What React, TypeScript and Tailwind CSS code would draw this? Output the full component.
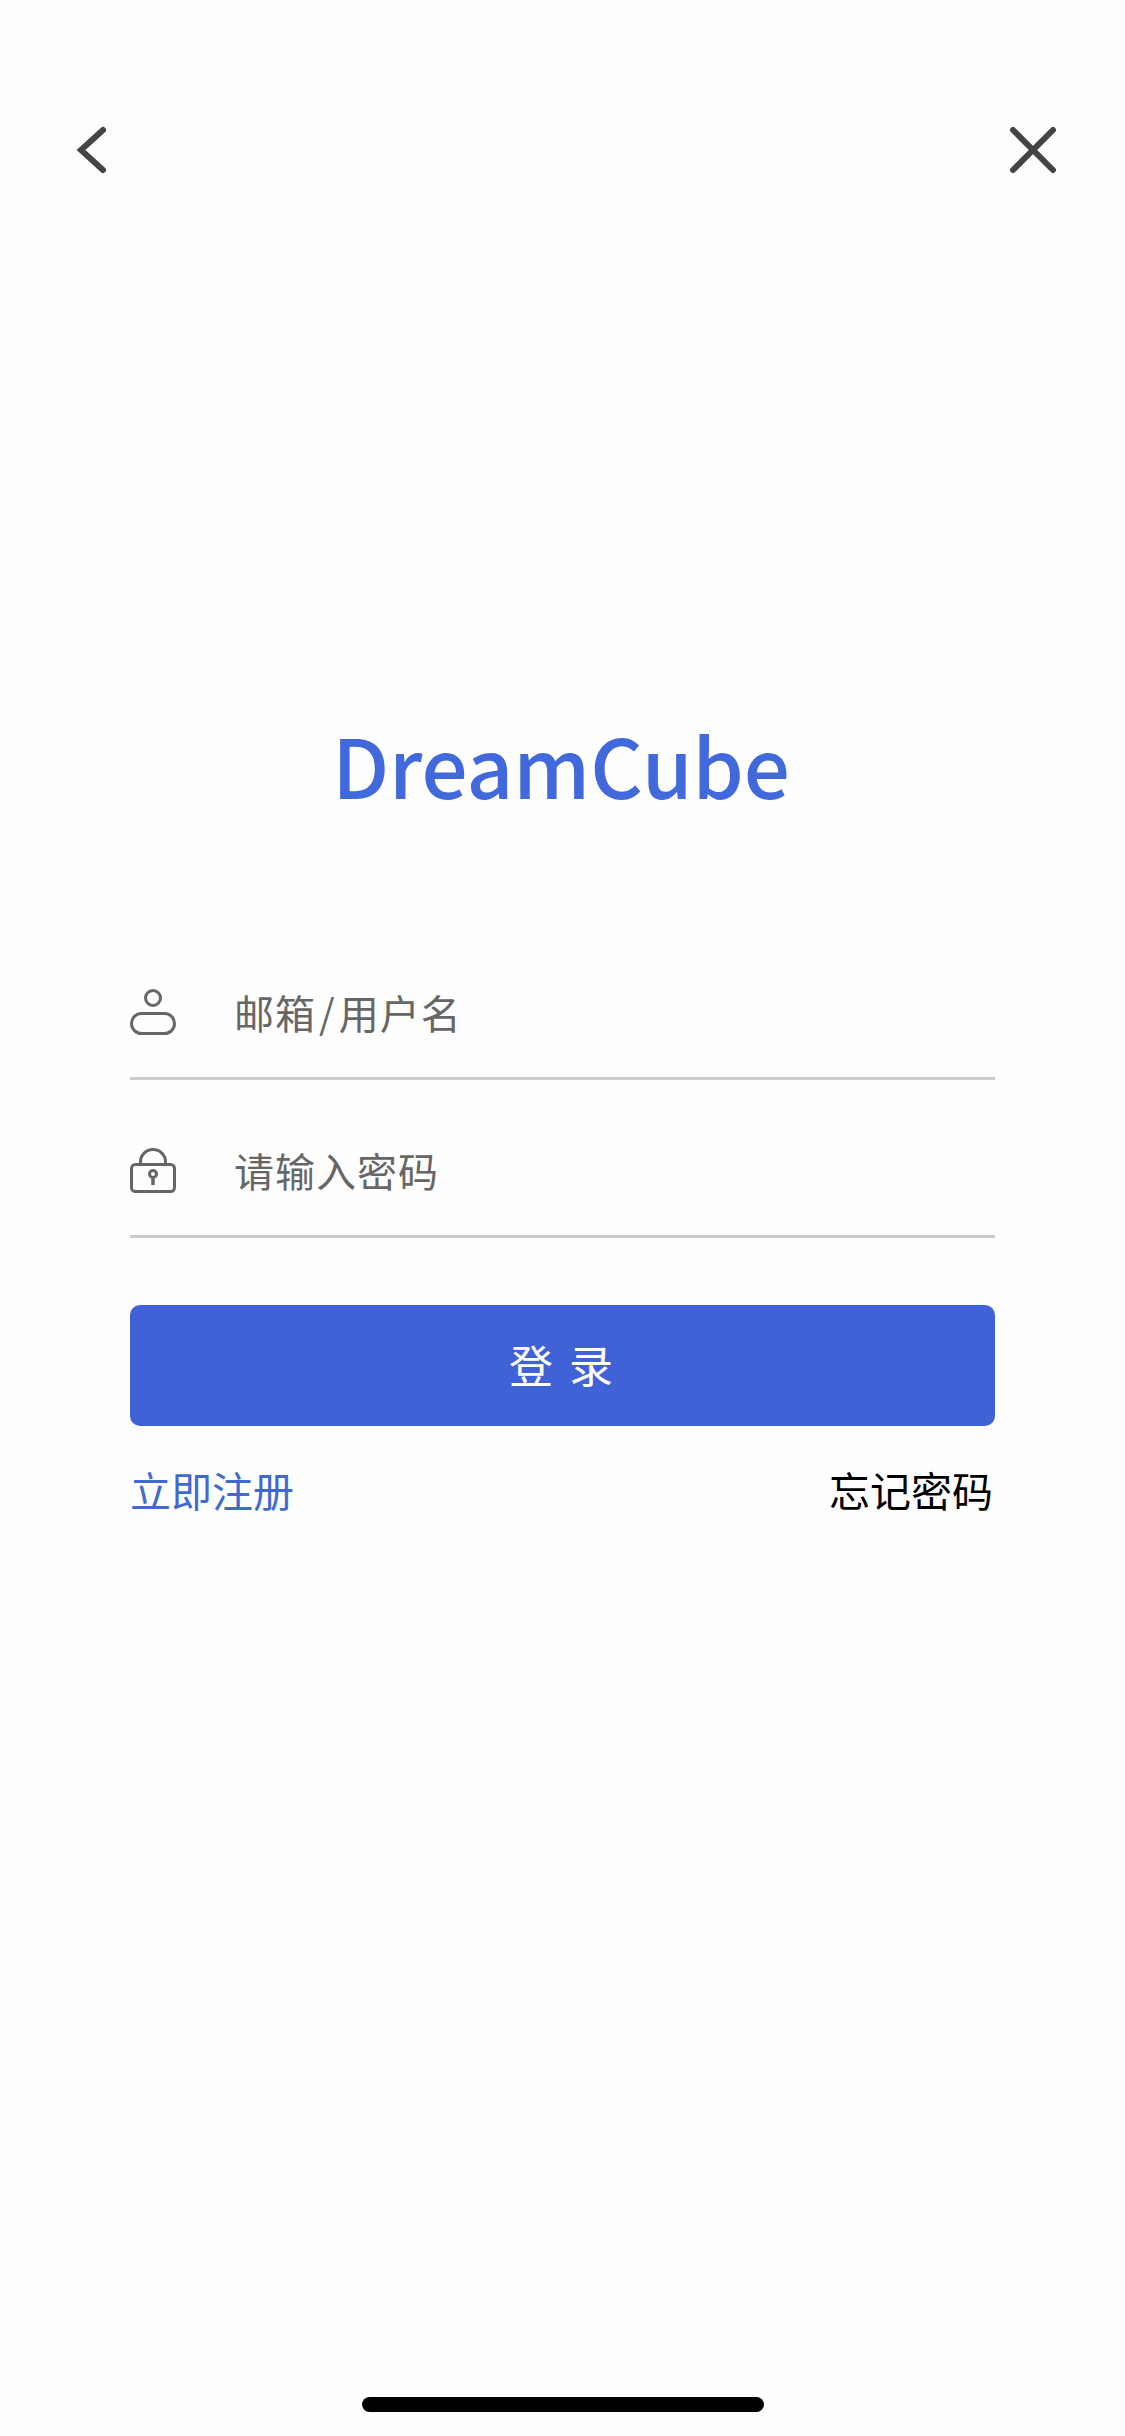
import React from 'react';

const FONT = "font-['Noto_Sans_CJK_SC','Noto_Sans',sans-serif]";

const BackIcon = () => (
  <svg width="60" height="60" viewBox="0 0 60 60" fill="none" stroke="#444444" strokeWidth="6" strokeLinecap="round" strokeLinejoin="miter">
    <path d="M43 10 L21 30 L43 50" />
  </svg>
);

const CloseIcon = () => (
  <svg width="60" height="60" viewBox="0 0 60 60" fill="none" stroke="#444444" strokeWidth="6" strokeLinecap="round">
    <path d="M10 10 L50 50 M50 10 L10 50" />
  </svg>
);

const UserIcon = () => (
  <svg width="46" height="46" viewBox="0 0 46 46" fill="none" stroke="#666666" strokeWidth="3">
    <circle cx="23" cy="9" r="7.5" />
    <rect x="1.5" y="24.5" width="43" height="20" rx="10" />
  </svg>
);

const LockIcon = () => (
  <svg width="46" height="46" viewBox="0 0 46 46" fill="none" stroke="#666666" strokeWidth="3">
    <path d="M10.5 17 V15 A12.5 12.5 0 0 1 35.5 15 V17" />
    <rect x="1.5" y="17.5" width="43" height="27" rx="4" />
    <circle cx="23" cy="27" r="3.5" strokeWidth="3" />
    <path d="M23 30 V38" strokeWidth="3.5" />
  </svg>
);

const Field: React.FC<{ icon: React.ReactNode; children: React.ReactNode }> = ({ icon, children }) => (
  <div className="flex h-[158px] items-end border-b-[3px] border-[#cccccc]">
    <div className="flex h-[88px] w-full items-start">
      <div className="w-[104px] shrink-0">{icon}</div>
      <span className="text-[40px] leading-[46px] tracking-[1px] text-[#666666]">{children}</span>
    </div>
  </div>
);

export default function App() {
  return (
    <div className={`relative flex h-[2436px] w-[1125px] flex-col overflow-hidden bg-[#fefefe] ${FONT}`}>
      {/* Header */}
      <header className="flex items-center justify-between pl-[60px] pr-[62px] pt-[120px]">
        <BackIcon />
        <CloseIcon />
      </header>

      {/* Logo */}
      <h1 className="mt-[523px] pr-[3px] text-center text-[81.5px] font-medium leading-[120px] text-[#4169dc]">DreamCube</h1>

      {/* Form */}
      <main className="mt-[99px] flex flex-col px-[130px]">
        <Field icon={<UserIcon />}>
          邮箱<span className="mx-[3px]">/</span>用户名
        </Field>
        <Field icon={<LockIcon />}>请输入密码</Field>
        <button className="mt-[67px] h-[121px] rounded-[10px] bg-[#4162d6] pb-[4px] text-[44px] tracking-[3px] text-white">登 录</button>
        <div className="mt-[39px] flex items-center justify-between pr-[2px] text-[41px] leading-[48px]">
          <span className="text-[#4169d0]">立即注册</span>
          <span className="text-black">忘记密码</span>
        </div>
      </main>

      {/* Home indicator */}
      <div className="absolute bottom-[24px] left-[362px] h-[15px] w-[402px] rounded-full bg-black" />
    </div>
  );
}
